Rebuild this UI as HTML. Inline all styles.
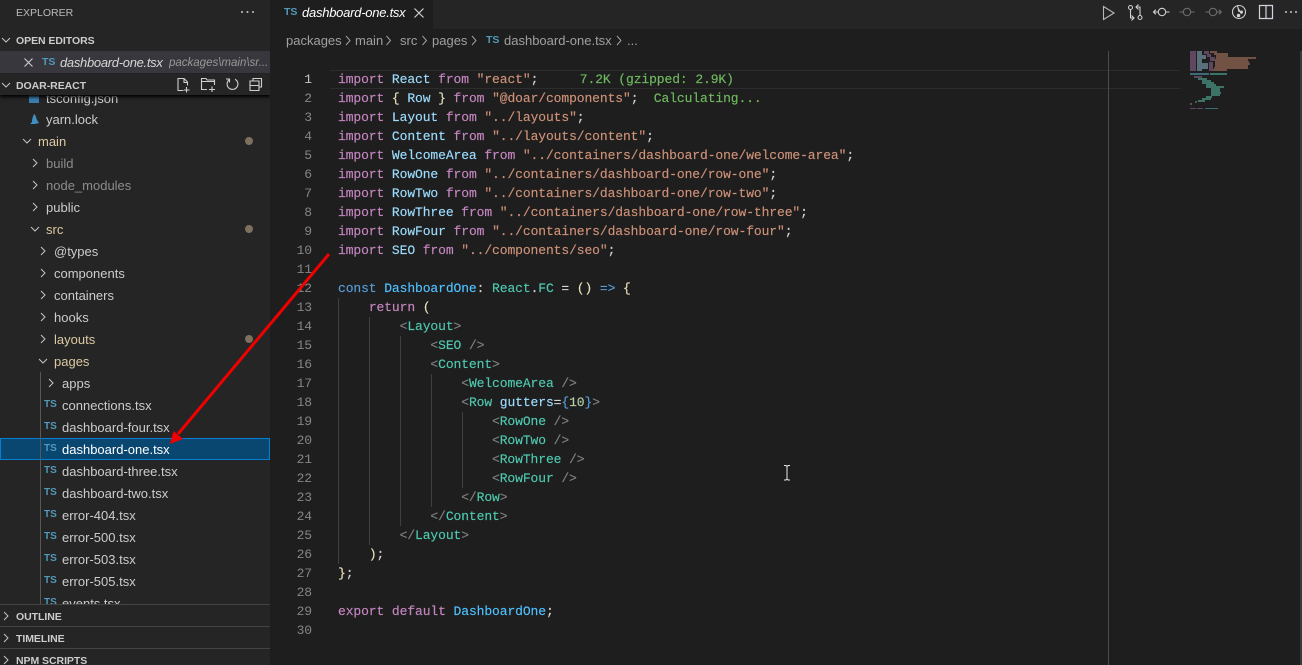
<!DOCTYPE html>
<html><head><meta charset="utf-8"><style>
html,body{margin:0;padding:0;width:1302px;height:665px;overflow:hidden;background:#1e1e1e}
*{box-sizing:border-box}
#side{position:absolute;left:0;top:0;width:270px;height:665px;background:#252526;overflow:hidden;font-family:"Liberation Sans",sans-serif;font-size:13px;color:#cccccc}
.r{position:absolute;white-space:nowrap;line-height:22px;height:22px;margin-top:1px}
.ts{position:absolute;font-family:"Liberation Sans",sans-serif;font-weight:bold;font-size:10px;color:#519aba;line-height:22px;height:22px;margin-top:1px}
.h{position:absolute;left:16px;font-weight:bold;font-size:10.5px;letter-spacing:-.05px;color:#cccccc;line-height:22px;height:22px;white-space:nowrap;margin-top:1px}
.c{position:absolute;font-family:"Liberation Mono",monospace;font-size:13px;letter-spacing:-.1px;line-height:19px;height:19px;white-space:pre;left:338px;color:#d4d4d4;-webkit-text-stroke:.15px}
.n{position:absolute;left:282px;width:30px;text-align:right;font-family:"Liberation Mono",monospace;font-size:13px;letter-spacing:-.1px;line-height:19px;height:19px;color:#858585}
.k{color:#c586c0}.v{color:#9cdcfe}.s{color:#ce9178}.b{color:#569cd6}.t{color:#4ec9b0}.g{color:#808080}.y{color:#e8e0b8}.d{color:#4fc1ff}.m{color:#b5cea8}.u{color:#6fbb5f}
.guide{position:absolute;width:1px;background:#404040}
.mm{color:#dcc9a0}
svg{position:absolute;overflow:visible}
</style></head><body>

<div style="position:absolute;left:270px;top:0;width:1032px;height:29px;background:#252526"></div>
<div style="position:absolute;left:270px;top:0;width:163px;height:29px;background:#1e1e1e"></div>
<div class="ts" style="left:284px;top:0px;font-size:10.5px">TS</div>
<div style="position:absolute;left:302px;top:2px;font:italic 13px/22px 'Liberation Sans',sans-serif;letter-spacing:-.25px;color:#fff;white-space:nowrap">dashboard-one.tsx</div>
<svg style="left:414px;top:8px" width="10" height="10" viewBox="0 0 10 10"><path d="M.5 .5L9.500 9.500M9.500 .5L.5 9.500" stroke="#d0d0d0" stroke-width="1.200" fill="none"/></svg>

<div style="position:absolute;left:286px;top:30px;font:13px/22px 'Liberation Sans',sans-serif;color:#a0a0a0;white-space:nowrap">packages</div>
<div style="position:absolute;left:355px;top:30px;font:13px/22px 'Liberation Sans',sans-serif;color:#a0a0a0;white-space:nowrap">main</div>
<div style="position:absolute;left:400px;top:30px;font:13px/22px 'Liberation Sans',sans-serif;color:#a0a0a0;white-space:nowrap">src</div>
<div style="position:absolute;left:432px;top:30px;font:13px/22px 'Liberation Sans',sans-serif;color:#a0a0a0;white-space:nowrap">pages</div>
<div class="ts" style="left:486px;top:28px;font-size:10.5px">TS</div>
<div style="position:absolute;left:504px;top:30px;font:13px/22px 'Liberation Sans',sans-serif;color:#a0a0a0;white-space:nowrap">dashboard-one.tsx</div>
<div style="position:absolute;left:627px;top:30px;font:13px/22px 'Liberation Sans',sans-serif;color:#a0a0a0;white-space:nowrap">...</div>
<svg style="left:0;top:0" width="1302" height="60"><g fill="none" stroke="#a0a0a0" stroke-width="1"><path d="M346 36l4 4.500-4 4.500M386.500 36l4 4.500-4 4.500M422.500 36l4 4.500-4 4.500M472 36l4 4.500-4 4.500M617 36l4 4.500-4 4.500"/></g></svg>

<!-- toolbar icons -->
<svg style="left:0;top:0" width="1302" height="30" fill="none">
<path d="M1103.500 6.500v13l10.500-6.500z" stroke="#b8b8b8" stroke-width="1.100"/>
<g stroke="#d0d0d0" stroke-width="1.100"><circle cx="1130.500" cy="7.500" r="2"/><circle cx="1140" cy="17.500" r="2"/><path d="M1130.500 9.500v8.500h3.500M1131.500 15.500l2.500 2.500-2.500 2.500M1140 15.500V7h-3.500M1138.500 4.500L1136 7l2.500 2.500"/>
<circle cx="1162" cy="12" r="3.700"/><path d="M1158.300 12h-4.800M1155.800 9.700L1153.500 12l2.300 2.300M1165.700 12h3.800"/></g>
<g stroke="#6d6d6d" stroke-width="1.100"><circle cx="1187" cy="12" r="3.700"/><path d="M1179.500 12h3.800M1190.700 12h4"/><circle cx="1213" cy="12" r="3.700"/><path d="M1205.500 12h3.800M1216.700 12h4.300M1219 9.700l2.300 2.300-2.300 2.300"/></g>
<g stroke="#d0d0d0" stroke-width="1.100"><circle cx="1239" cy="12" r="6.500"/><path d="M1237.500 5.800l1.500 6.200M1238 8l3.500 6"/><circle cx="1238.500" cy="15.500" r="1.200" fill="#d0d0d0"/><circle cx="1241.500" cy="12" r="1" fill="#d0d0d0"/></g>
<path d="M1259.500 5.500h13v13h-13zM1266 5.500v13" stroke="#d8d0dc" stroke-width="1.200"/>
<g fill="#c5c5c5"><circle cx="1286" cy="12" r="1"/><circle cx="1291" cy="12" r="1"/><circle cx="1296" cy="12" r="1"/></g>
</svg>

<!-- sidebar -->
<div id="side">
<div style="position:absolute;left:16px;top:2px;font-size:10.5px;line-height:22px;color:#bbbbbb">EXPLORER</div>
<svg style="left:240px;top:9px" width="16" height="6"><g fill="#c5c5c5"><circle cx="2" cy="3" r="1"/><circle cx="7.500" cy="3" r="1"/><circle cx="13" cy="3" r="1"/></g></svg>

<svg style="left:0;top:0" width="270" height="665" fill="none"><path d="M2 38l4 4 4-4" stroke="#c5c5c5"/></svg>
<div class="h" style="top:29px">OPEN EDITORS</div>

<div style="position:absolute;left:0;top:51px;width:270px;height:22px;background:#37373d"></div>
<svg style="left:24px;top:58px" width="9" height="9"><path d="M.5 .5L8.500 8.500M8.500 .5L.5 8.500" stroke="#cccccc" stroke-width="1.100"/></svg>
<div class="ts" style="left:42px;top:50px;font-size:10.500px">TS</div>
<div class="r" style="left:60px;top:51px;font-style:italic;letter-spacing:-.3px;color:#d7d7d7">dashboard-one.tsx</div>
<div class="r" style="left:169px;top:51px;width:101px;font-style:italic;font-size:11.500px;color:#9a9a9a;overflow:hidden">packages\main\sr...</div>

<!-- tree -->
<svg style="left:28px;top:92px" width="12" height="12"><rect x="1" y="2" width="10" height="9" fill="#3a7cae"/></svg>
<div class="r" style="left:46px;top:87px">tsconfig.json</div>
<svg style="left:28px;top:112px" width="12" height="14"><path d="M4 10C4 6 5 5 6 2c2 1 2 4 3 6l2 3-4 1H2z" fill="#3f8fc0"/></svg>
<div class="r" style="left:46px;top:108px">yarn.lock</div>
<div class="r mm" style="left:38px;top:130px">main</div>
<div class="r" style="left:46px;top:152px;color:#8c8c8c">build</div>
<div class="r" style="left:46px;top:174px;color:#8c8c8c">node_modules</div>
<div class="r" style="left:46px;top:196px">public</div>
<div class="r mm" style="left:46px;top:218px">src</div>
<div class="r" style="left:54px;top:240px">@types</div>
<div class="r" style="left:54px;top:262px">components</div>
<div class="r" style="left:54px;top:284px">containers</div>
<div class="r" style="left:54px;top:306px">hooks</div>
<div class="r mm" style="left:54px;top:328px">layouts</div>
<div class="r mm" style="left:54px;top:350px">pages</div>
<div class="r" style="left:62px;top:372px">apps</div>

<div style="position:absolute;left:0;top:438px;width:270px;height:22px;background:#094771;border:1px solid #007fd4"></div>
<div style="position:absolute;left:40px;top:372px;width:1px;height:232px;background:#585858"></div>

<div class="ts" style="left:44px;top:393px">TS</div><div class="r" style="left:62px;top:394px">connections.tsx</div>
<div class="ts" style="left:44px;top:415px">TS</div><div class="r" style="left:62px;top:416px">dashboard-four.tsx</div>
<div class="ts" style="left:44px;top:437px">TS</div><div class="r" style="left:62px;top:438px;color:#fff">dashboard-one.tsx</div>
<div class="ts" style="left:44px;top:459px">TS</div><div class="r" style="left:62px;top:460px">dashboard-three.tsx</div>
<div class="ts" style="left:44px;top:481px">TS</div><div class="r" style="left:62px;top:482px">dashboard-two.tsx</div>
<div class="ts" style="left:44px;top:503px">TS</div><div class="r" style="left:62px;top:504px">error-404.tsx</div>
<div class="ts" style="left:44px;top:525px">TS</div><div class="r" style="left:62px;top:526px">error-500.tsx</div>
<div class="ts" style="left:44px;top:547px">TS</div><div class="r" style="left:62px;top:548px">error-503.tsx</div>
<div class="ts" style="left:44px;top:569px">TS</div><div class="r" style="left:62px;top:570px">error-505.tsx</div>
<div class="ts" style="left:44px;top:591px">TS</div><div class="r" style="left:62px;top:592px">events.tsx</div>

<svg style="left:0;top:0" width="270" height="604" fill="none"><g stroke="#c5c5c5"><path d="M23 139l4 4 4-4M31 227l4 4 4-4M39 359l4 4 4-4M33 159l4 4-4 4M33 181l4 4-4 4M33 203l4 4-4 4M41 247l4 4-4 4M41 269l4 4-4 4M41 291l4 4-4 4M41 313l4 4-4 4M41 335l4 4-4 4M49 379l4 4-4 4"/></g>
<g fill="#7d705c"><circle cx="249" cy="141" r="4"/><circle cx="249" cy="229" r="4"/><circle cx="249" cy="339" r="4"/></g></svg>

<!-- project header -->
<div style="position:absolute;left:0;top:74px;width:270px;height:21px;background:#252526;box-shadow:0 2px 3px #000"></div>
<svg style="left:0;top:0" width="270" height="100" fill="none"><path d="M2 83l4 4 4-4" stroke="#c5c5c5"/>
<g stroke="#cfcfcf" stroke-width="1.100"><path d="M183.500 90.500h-5.500v-12h6l3.500 3.500v3.500M184 78.500v4h3.500M186.500 87v5.500M184 90h5.500"/>
<path d="M207 89.500h-5.500v-11h4.500l1 1.500h7.500v5M201.500 81.500h13.500M212 86.500v5.500M209 89.500h6"/>
<path d="M235 79.200a5.400 5.400 0 1 1-5.500 0.300M226 79h3.500v3.500" />
<path d="M253 80.500v-2h8.500v8.500h-2M250 81h9v9.500h-9zM250 85.500h9"/></g></svg>
<div class="h" style="top:74px">DOAR-REACT</div>

<!-- bottom panes -->
<div style="position:absolute;left:0;top:604px;width:270px;height:61px;background:#252526;border-top:1px solid #444"></div>
<div style="position:absolute;left:0;top:626px;width:270px;height:1px;background:#444"></div>
<div style="position:absolute;left:0;top:648px;width:270px;height:1px;background:#444"></div>
<svg style="left:0;top:0" width="270" height="665" fill="none"><path d="M4 612l4 4-4 4M4 634l4 4-4 4M4 656l4 4-4 4" stroke="#c5c5c5"/></svg>
<div class="h" style="top:605px">OUTLINE</div>
<div class="h" style="top:627px">TIMELINE</div>
<div class="h" style="top:649px">NPM SCRIPTS</div>
</div>

<!-- editor -->
<div style="position:absolute;left:330px;top:70px;width:850px;height:19px;border-top:1px solid #2c2c2c;border-bottom:1px solid #2c2c2c"></div>
<div style="position:absolute;left:1108px;top:51px;width:1px;height:614px;background:#4a4a4a"></div>
<div style="position:absolute;left:1300px;top:51px;width:2px;height:614px;background:#3a3a3a"></div>

<div class="guide" style="left:338px;top:298px;height:266px"></div>
<div class="guide" style="left:369px;top:317px;height:228px"></div>
<div class="guide" style="left:400px;top:336px;height:190px"></div>
<div class="guide" style="left:431px;top:374px;height:133px"></div>
<div class="guide" style="left:462px;top:412px;height:76px"></div>

<div class="n" style="top:70px;color:#c6c6c6">1</div><div class="c" style="top:70px"><span class="k">import</span> <span class="v">React</span> <span class="k">from</span> <span class="s">"react"</span>;     <span class="u" style="padding-left:3px">7.2K (gzipped: 2.9K)</span></div>
<div class="n" style="top:89px">2</div><div class="c" style="top:89px"><span class="k">import</span> <span class="y">{</span> <span class="v">Row</span> <span class="y">}</span> <span class="k">from</span> <span class="s">"@doar/components"</span>;  <span class="u">Calculating...</span></div>
<div class="n" style="top:108px">3</div><div class="c" style="top:108px"><span class="k">import</span> <span class="v">Layout</span> <span class="k">from</span> <span class="s">"../layouts"</span>;</div>
<div class="n" style="top:127px">4</div><div class="c" style="top:127px"><span class="k">import</span> <span class="v">Content</span> <span class="k">from</span> <span class="s">"../layouts/content"</span>;</div>
<div class="n" style="top:146px">5</div><div class="c" style="top:146px"><span class="k">import</span> <span class="v">WelcomeArea</span> <span class="k">from</span> <span class="s">"../containers/dashboard-one/welcome-area"</span>;</div>
<div class="n" style="top:165px">6</div><div class="c" style="top:165px"><span class="k">import</span> <span class="v">RowOne</span> <span class="k">from</span> <span class="s">"../containers/dashboard-one/row-one"</span>;</div>
<div class="n" style="top:184px">7</div><div class="c" style="top:184px"><span class="k">import</span> <span class="v">RowTwo</span> <span class="k">from</span> <span class="s">"../containers/dashboard-one/row-two"</span>;</div>
<div class="n" style="top:203px">8</div><div class="c" style="top:203px"><span class="k">import</span> <span class="v">RowThree</span> <span class="k">from</span> <span class="s">"../containers/dashboard-one/row-three"</span>;</div>
<div class="n" style="top:222px">9</div><div class="c" style="top:222px"><span class="k">import</span> <span class="v">RowFour</span> <span class="k">from</span> <span class="s">"../containers/dashboard-one/row-four"</span>;</div>
<div class="n" style="top:241px">10</div><div class="c" style="top:241px"><span class="k">import</span> <span class="v">SEO</span> <span class="k">from</span> <span class="s">"../components/seo"</span>;</div>
<div class="n" style="top:260px">11</div>
<div class="n" style="top:279px">12</div><div class="c" style="top:279px"><span class="b">const</span> <span class="d">DashboardOne</span>: <span class="t">React</span>.<span class="t">FC</span> = <span class="y">()</span> <span class="b">=&gt;</span> <span class="y">{</span></div>
<div class="n" style="top:298px">13</div><div class="c" style="top:298px">    <span class="k">return</span> <span class="y">(</span></div>
<div class="n" style="top:317px">14</div><div class="c" style="top:317px">        <span class="g">&lt;</span><span class="t">Layout</span><span class="g">&gt;</span></div>
<div class="n" style="top:336px">15</div><div class="c" style="top:336px">            <span class="g">&lt;</span><span class="t">SEO</span> <span class="g">/&gt;</span></div>
<div class="n" style="top:355px">16</div><div class="c" style="top:355px">            <span class="g">&lt;</span><span class="t">Content</span><span class="g">&gt;</span></div>
<div class="n" style="top:374px">17</div><div class="c" style="top:374px">                <span class="g">&lt;</span><span class="t">WelcomeArea</span> <span class="g">/&gt;</span></div>
<div class="n" style="top:393px">18</div><div class="c" style="top:393px">                <span class="g">&lt;</span><span class="t">Row</span> <span class="v">gutters</span>=<span class="b">{</span><span class="m">10</span><span class="b">}</span><span class="g">&gt;</span></div>
<div class="n" style="top:412px">19</div><div class="c" style="top:412px">                    <span class="g">&lt;</span><span class="t">RowOne</span> <span class="g">/&gt;</span></div>
<div class="n" style="top:431px">20</div><div class="c" style="top:431px">                    <span class="g">&lt;</span><span class="t">RowTwo</span> <span class="g">/&gt;</span></div>
<div class="n" style="top:450px">21</div><div class="c" style="top:450px">                    <span class="g">&lt;</span><span class="t">RowThree</span> <span class="g">/&gt;</span></div>
<div class="n" style="top:469px">22</div><div class="c" style="top:469px">                    <span class="g">&lt;</span><span class="t">RowFour</span> <span class="g">/&gt;</span></div>
<div class="n" style="top:488px">23</div><div class="c" style="top:488px">                <span class="g">&lt;/</span><span class="t">Row</span><span class="g">&gt;</span></div>
<div class="n" style="top:507px">24</div><div class="c" style="top:507px">            <span class="g">&lt;/</span><span class="t">Content</span><span class="g">&gt;</span></div>
<div class="n" style="top:526px">25</div><div class="c" style="top:526px">        <span class="g">&lt;/</span><span class="t">Layout</span><span class="g">&gt;</span></div>
<div class="n" style="top:545px">26</div><div class="c" style="top:545px">    <span class="y">)</span>;</div>
<div class="n" style="top:564px">27</div><div class="c" style="top:564px"><span class="y">}</span>;</div>
<div class="n" style="top:583px">28</div>
<div class="n" style="top:602px">29</div><div class="c" style="top:602px"><span class="k">export</span> <span class="k">default</span> <span class="d">DashboardOne</span>;</div>
<div class="n" style="top:621px">30</div>

<!-- minimap -->
<svg style="left:1190px;top:51px;opacity:.62" width="72" height="62" shape-rendering="crispEdges">
<g fill="#8a5f87"><rect x="0" y="0" width="6" height="20"/><rect x="0" y="25" width="0" height="0"/></g>
<g fill="#7aa3b5"><rect x="7" y="0" width="5" height="20"/><rect x="12" y="4" width="4" height="4"/><rect x="12" y="12" width="6" height="6"/></g>
<g fill="#8a5f87"><rect x="14" y="0" width="5" height="3"/><rect x="17" y="3" width="4" height="3"/><rect x="20" y="6" width="5" height="4"/><rect x="19" y="11" width="4" height="9"/></g>
<g fill="#a5725e"><rect x="20" y="0" width="7" height="2"/><rect x="24" y="2" width="14" height="2"/><rect x="26" y="4" width="12" height="2"/><rect x="26" y="6" width="40" height="2"/><rect x="25" y="8" width="33" height="2"/><rect x="25" y="10" width="34" height="2"/><rect x="25" y="12" width="35" height="2"/><rect x="25" y="14" width="33" height="2"/><rect x="24" y="16" width="34" height="2"/><rect x="23" y="18" width="14" height="2"/></g>
<g fill="#4f9cb5"><rect x="0" y="22" width="6" height="2"/><rect x="6" y="22" width="13" height="2"/></g>
<g fill="#4da893"><rect x="20" y="22" width="17" height="2"/><rect x="4" y="25" width="8" height="2" fill="#8a5f87"/><rect x="8" y="27" width="9" height="2"/><rect x="12" y="29" width="9" height="2"/><rect x="12" y="31" width="12" height="2"/><rect x="16" y="33" width="10" height="2"/><rect x="16" y="35" width="18" height="2"/><rect x="21" y="37" width="9" height="2"/><rect x="21" y="39" width="9" height="2"/><rect x="21" y="41" width="10" height="2"/><rect x="21" y="43" width="9" height="2"/><rect x="16" y="45" width="6" height="2"/><rect x="12" y="47" width="9" height="2"/><rect x="8" y="49" width="7" height="2"/></g>
<rect x="5" y="50" width="2" height="2" fill="#777"/><rect x="0" y="52" width="2" height="2" fill="#777"/>
<g fill="#8a5f87"><rect x="0" y="57" width="6" height="1"/><rect x="7" y="57" width="6" height="1"/></g><rect x="15" y="57" width="13" height="1" fill="#4f9cb5"/>
</svg>

<!-- I-beam -->
<svg style="left:782px;top:465px" width="10" height="16"><path d="M2 0.500h2l1 1 1-1h2M5 1.500v12.500M2 15h2l1-1 1 1h2" stroke="#e8e8e8" fill="none"/></svg>

<!-- red arrow -->
<svg style="left:0;top:0" width="1302" height="665"><path d="M329 254L178 434" stroke="#f00000" stroke-width="3" fill="none"/><path d="M170 444L173.500 431L183 439z" fill="#f00000"/></svg>

</body></html>
